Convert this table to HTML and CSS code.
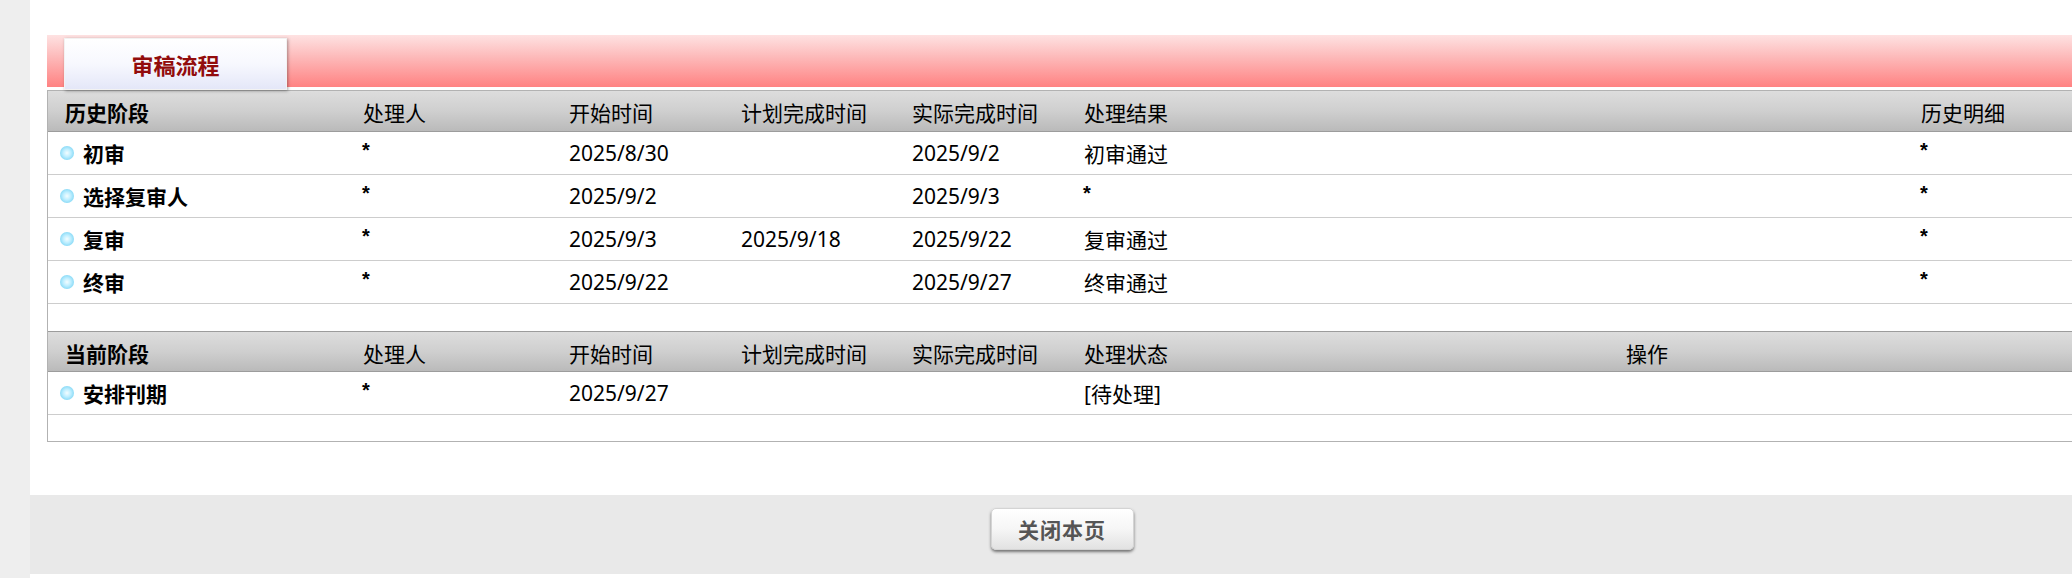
FILE: index.html
```html
<!DOCTYPE html>
<html lang="zh-CN">
<head>
<meta charset="utf-8">
<title>审稿流程</title>
<link rel="stylesheet" href="styles.css">
</head>
<body>
<div class="page">
  <aside class="side"></aside>
  <main class="main">
    <section class="content">
      <div class="tabbar">
        <div class="tab">审稿流程</div>
      </div>
      <div class="flow">
        <div class="row head hist">
          <div class="cell first">历史阶段</div>
          <div class="cell">处理人</div>
          <div class="cell">开始时间</div>
          <div class="cell">计划完成时间</div>
          <div class="cell">实际完成时间</div>
          <div class="cell">处理结果</div>
          <div class="cell">历史明细</div>
        </div>
        <div class="row data hist">
          <div class="cell stage"><span class="dot"></span>初审</div>
          <div class="cell mark">*</div>
          <div class="cell">2025/8/30</div>
          <div class="cell"></div>
          <div class="cell">2025/9/2</div>
          <div class="cell">初审通过</div>
          <div class="cell mark">*</div>
        </div>
        <div class="row data hist">
          <div class="cell stage"><span class="dot"></span>选择复审人</div>
          <div class="cell mark">*</div>
          <div class="cell">2025/9/2</div>
          <div class="cell"></div>
          <div class="cell">2025/9/3</div>
          <div class="cell mark">*</div>
          <div class="cell mark">*</div>
        </div>
        <div class="row data hist">
          <div class="cell stage"><span class="dot"></span>复审</div>
          <div class="cell mark">*</div>
          <div class="cell">2025/9/3</div>
          <div class="cell">2025/9/18</div>
          <div class="cell">2025/9/22</div>
          <div class="cell">复审通过</div>
          <div class="cell mark">*</div>
        </div>
        <div class="row data hist">
          <div class="cell stage"><span class="dot"></span>终审</div>
          <div class="cell mark">*</div>
          <div class="cell">2025/9/22</div>
          <div class="cell"></div>
          <div class="cell">2025/9/27</div>
          <div class="cell">终审通过</div>
          <div class="cell mark">*</div>
        </div>
        <div class="spacer"></div>
        <div class="row head cur top-line">
          <div class="cell first">当前阶段</div>
          <div class="cell">处理人</div>
          <div class="cell">开始时间</div>
          <div class="cell">计划完成时间</div>
          <div class="cell">实际完成时间</div>
          <div class="cell">处理状态</div>
          <div class="cell">操作</div>
        </div>
        <div class="row data cur">
          <div class="cell stage"><span class="dot"></span>安排刊期</div>
          <div class="cell mark">*</div>
          <div class="cell">2025/9/27</div>
          <div class="cell"></div>
          <div class="cell"></div>
          <div class="cell">[待处理]</div>
          <div class="cell"></div>
        </div>
        <div class="spacer end"></div>
      </div>
    </section>
    <footer class="footer">
      <button class="close-btn" type="button">关闭本页</button>
    </footer>
  </main>
</div>
</body>
</html>
```
FILE: styles.css
```css
html, body {
  margin: 0;
  padding: 0;
  background: #fff;
  overflow: hidden;
}

body {
  font-family: "Noto Sans", "Noto Sans CJK SC", sans-serif;
  color: #000;
}

.page {
  display: flex;
  min-height: 578px;
  width: 2094px;
}

.side {
  width: 30px;
  flex: none;
  background: #eeeeee;
}

.main {
  width: 2064px;
  flex: none;
  display: flex;
  flex-direction: column;
  background: #fff;
}

.content {
  padding: 35px 17px 0 17px;
}

.tabbar {
  height: 52px;
  display: flex;
  align-items: flex-start;
  padding-left: 17px;
  background: linear-gradient(to bottom, #fee2e2 0%, #fdb7b7 45%, #ff8282 100%);
}

.tab {
  margin-top: 3px;
  width: 223px;
  height: 52px;
  box-sizing: border-box;
  display: flex;
  align-items: center;
  justify-content: center;
  font-size: 22px;
  font-weight: 700;
  color: #920c0c;
  background: linear-gradient(to bottom, #ffffff 0%, #f7f8fe 50%, #e4e7f8 100%);
  border: 1px solid #f2f2f2;
  box-shadow: 1px 1px 3px rgba(0, 0, 0, 0.35);
  position: relative;
  z-index: 1;
}

.flow {
  margin-top: 3px;
  border: 1px solid #b2b2b2;
  border-right: none;
}

.row {
  display: grid;
  font-size: 21px;
}

.row.hist {
  grid-template-columns: 298px 206px 172px 171px 172px 837px 1fr;
}

.row.cur {
  grid-template-columns: 298px 206px 172px 171px 172px 542px 1fr;
}

.cell {
  padding-left: 17px;
  display: flex;
  align-items: center;
  white-space: nowrap;
}

.head {
  height: 39px;
  border-bottom: 1px solid #9c9c9c;
  background: linear-gradient(to bottom, #dddddd 0%, #cfcfcf 50%, #bababa 100%);
  padding-top: 1px;
}

.head .cell {
  padding-top: 1px;
}

.head .first {
  font-weight: 700;
}

.head.top-line {
  border-top: 1px solid #9c9c9c;
  height: 38px;
}

.data {
  height: 42px;
  border-bottom: 1px solid #cdcdcd;
}

.data .cell {
  padding-top: 0;
}

.data .mark {
  font-family: "Liberation Sans", sans-serif;
  font-size: 20px;
  font-weight: 700;
  align-items: flex-start;
  padding-top: 7px;
  padding-left: 16px;
}

.data .stage {
  padding-left: 12px;
  font-weight: 700;
}

.dot {
  width: 14px;
  height: 14px;
  border-radius: 50%;
  margin-right: 9px;
  margin-top: 0;
  flex: none;
  background: radial-gradient(circle at 50% 50%, #f4fdff 0%, #bdeeff 40%, #5ec9ef 100%);
}

.spacer {
  height: 27px;
}

.spacer.end {
  height: 26px;
}

.footer {
  margin-top: 53px;
  height: 79px;
  background: #e9e9e9;
  display: flex;
  justify-content: center;
  align-items: flex-start;
}

.close-btn {
  margin-top: 13px;
  width: 143px;
  height: 42px;
  border: 1px solid #d4d4d4;
  border-radius: 5px;
  background: linear-gradient(to bottom, #ffffff 0%, #f6f6f6 50%, #e2e2e2 100%);
  box-shadow: 0 2px 3px rgba(0, 0, 0, 0.5);
  font-family: "Noto Sans CJK SC", sans-serif;
  font-size: 21px;
  font-weight: 700;
  letter-spacing: 1px;
  color: #555;
  padding: 0;
  cursor: pointer;
}
```
